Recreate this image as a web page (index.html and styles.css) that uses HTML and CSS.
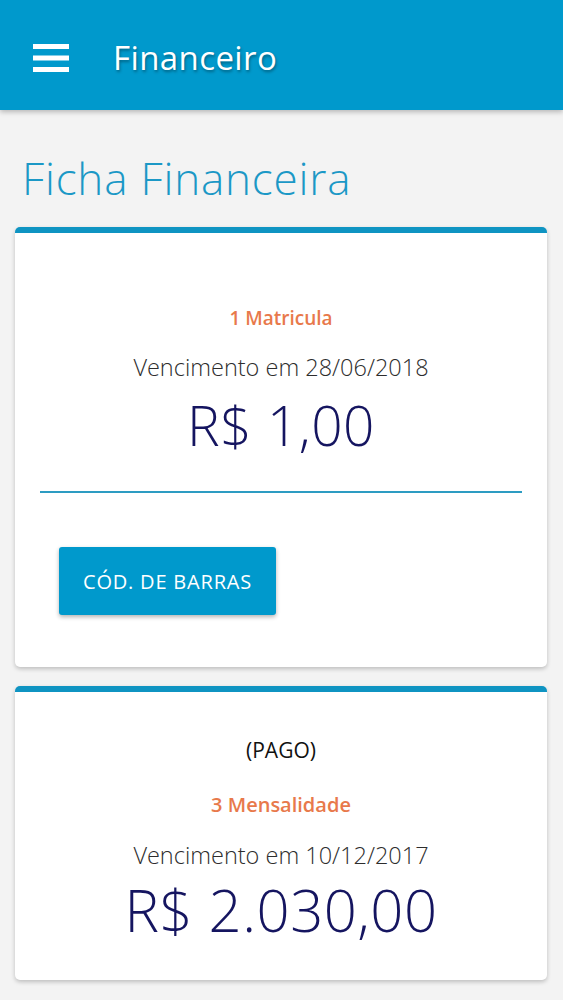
FILE: index.html
```html
<!DOCTYPE html>
<html lang="pt">
<head>
<meta charset="utf-8">
<title>Financeiro</title>
<link rel="stylesheet" href="styles.css">
</head>
<body>
<header class="topbar">
  <svg class="menu-icon" width="36" height="28" viewBox="0 0 36 28" aria-hidden="true">
    <rect x="0" y="0" width="36" height="5" fill="#fff"/>
    <rect x="0" y="11.5" width="36" height="5" fill="#fff"/>
    <rect x="0" y="23" width="36" height="5" fill="#fff"/>
  </svg>
  <h1 class="topbar-title">Financeiro</h1>
</header>
<main class="content">
  <h2 class="page-title">Ficha Financeira</h2>
  <section class="card">
    <p class="item-name">1 Matricula</p>
    <p class="due">Vencimento em 28/06/2018</p>
    <p class="amount">R$ 1,00</p>
    <hr class="divider">
    <div class="actions">
      <button class="btn">CÓD. DE BARRAS</button>
    </div>
  </section>
  <section class="card card-paid">
    <p class="status">(PAGO)</p>
    <p class="item-name">3 Mensalidade</p>
    <p class="due">Vencimento em 10/12/2017</p>
    <p class="amount amount-lg">R$ 2.030,00</p>
  </section>
</main>
</body>
</html>
```
FILE: styles.css
```css
* { box-sizing: border-box; }
html, body { margin: 0; padding: 0; }
body {
  background: #f3f3f3;
  font-family: "Open Sans", "Lato", sans-serif;
  color: #333;
  width: 563px;
  overflow: hidden;
}
.topbar {
  height: 110px;
  background: #0099cc;
  display: flex;
  align-items: center;
  padding-left: 33px;
  gap: 44px;
  box-shadow: 0 2px 5px rgba(0,0,0,0.25);
  position: relative;
}
.menu-icon { display: block; margin-top: 6px; }
.topbar-title {
  margin: 0;
  color: #fff;
  font-size: 33px;
  font-weight: 400;
  letter-spacing: 0.4px;
  text-shadow: 1px 2px 3px rgba(0,0,0,0.35);
  margin-top: 4px;
}
.content {
  padding: 0 16px 0 15px;
  display: flex;
  flex-direction: column;
}
.page-title {
  margin: 42px 0 0 7px;
  font-size: 44px;
  font-weight: 300;
  color: #1b98c6;
  line-height: 52px;
  height: 75px;
  letter-spacing: 0.8px;
}
.card {
  background: #fff;
  border-top: 6px solid #0f94c2;
  border-radius: 5px;
  box-shadow: 0 2px 4px rgba(0,0,0,0.22);
  display: flex;
  flex-direction: column;
  align-items: center;
  padding: 72px 25px 52px;
  margin-bottom: 19px;
}
.item-name {
  margin: 0;
  color: #e8794b;
  font-size: 19px;
  font-weight: 600;
  line-height: 26px;
}
.due {
  margin: 21px 0 0;
  font-size: 23.5px;
  font-weight: 300;
  color: #2d2d2d;
  line-height: 30px;
}
.amount {
  margin: 10px 0 0;
  font-size: 55px;
  font-weight: 300;
  color: #151560;
  line-height: 66px;
  letter-spacing: 0.5px;
}
.divider {
  align-self: stretch;
  border: 0;
  height: 2px;
  background: #2d9cc2;
  margin: 33px 0 0;
}
.actions {
  align-self: stretch;
  padding: 54px 0 0 19px;
}
.btn {
  width: 217px;
  height: 68px;
  background: #0099cc;
  color: #fff;
  border: 0;
  border-radius: 3px;
  font-family: inherit;
  font-size: 20px;
  font-weight: 400;
  letter-spacing: 0.8px;
  box-shadow: 0 2px 4px rgba(0,0,0,0.3);
}
.card-paid { padding-top: 45px; padding-bottom: 37px; }
.status {
  margin: 0;
  font-size: 21px;
  color: #111;
  font-weight: 400;
  line-height: 26px;
}
.card-paid .item-name { margin-top: 29px; font-size: 20px; }
.card-paid .due { margin-top: 22px; }
.card-paid .amount { margin-top: 7px; }
.amount-lg { font-size: 58px; }
```
